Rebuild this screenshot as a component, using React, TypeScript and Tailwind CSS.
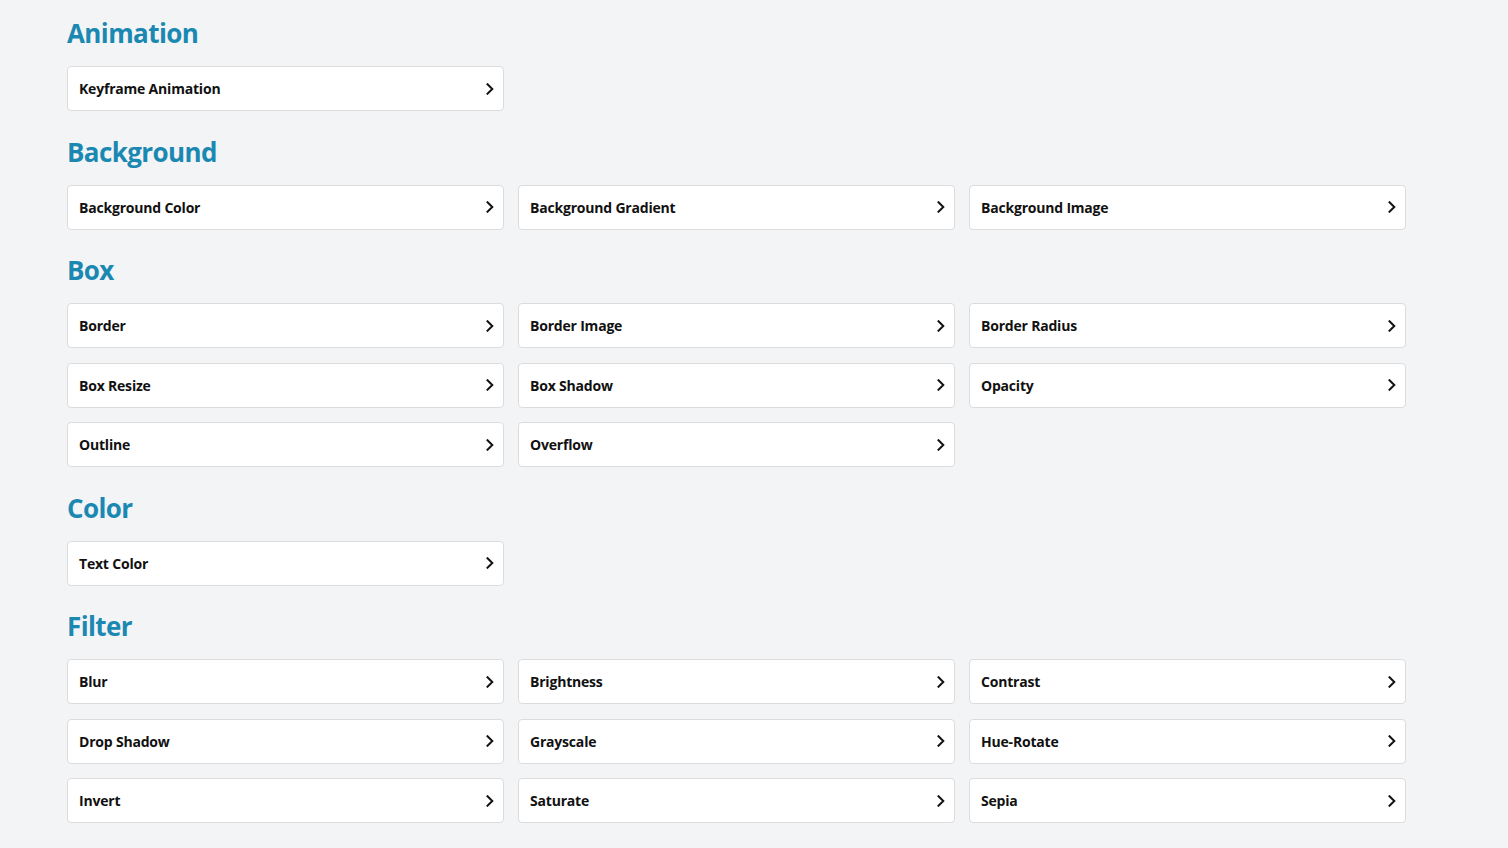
import React from "react";

type Section = { title: string; items: string[] };

const sections: Section[] = [
  { title: "Animation", items: ["Keyframe Animation"] },
  {
    title: "Background",
    items: ["Background Color", "Background Gradient", "Background Image"],
  },
  {
    title: "Box",
    items: [
      "Border",
      "Border Image",
      "Border Radius",
      "Box Resize",
      "Box Shadow",
      "Opacity",
      "Outline",
      "Overflow",
    ],
  },
  { title: "Color", items: ["Text Color"] },
  {
    title: "Filter",
    items: [
      "Blur",
      "Brightness",
      "Contrast",
      "Drop Shadow",
      "Grayscale",
      "Hue-Rotate",
      "Invert",
      "Saturate",
      "Sepia",
    ],
  },
];

const Chevron = () => (
  <svg width="8" height="12" viewBox="0 0 8 12" fill="none" className="shrink-0">
    <path d="M1.5 1.3 L6.3 6 L1.5 10.7" stroke="#111" strokeWidth="2" strokeLinecap="square" />
  </svg>
);

const App: React.FC = () => {
  return (
    <div className="min-h-screen bg-[#f3f4f6] font-['Open_Sans',sans-serif]">
      <div className="pl-[67px] pt-[15px] pb-[30px] w-[1406px] flex flex-col gap-[22.5px]">
        {sections.map((s) => (
          <section key={s.title}>
            <h2 className="text-[26px] leading-[36px] font-bold text-[#1b88b2] mb-[15px] tracking-[-0.6px]">
              {s.title}
            </h2>
            <div className="grid grid-cols-3 gap-x-[14px] gap-y-[14.5px]">
              {s.items.map((item) => (
                <a
                  key={item}
                  href="#"
                  className="h-[45px] flex items-center justify-between bg-white border border-[#dcdcdc] rounded-[4px] pl-[11px] pr-[9px] text-[14px] font-bold text-[#111] tracking-[-0.2px]"
                >
                  <span>{item}</span>
                  <Chevron />
                </a>
              ))}
            </div>
          </section>
        ))}
      </div>
    </div>
  );
};

export default App;
